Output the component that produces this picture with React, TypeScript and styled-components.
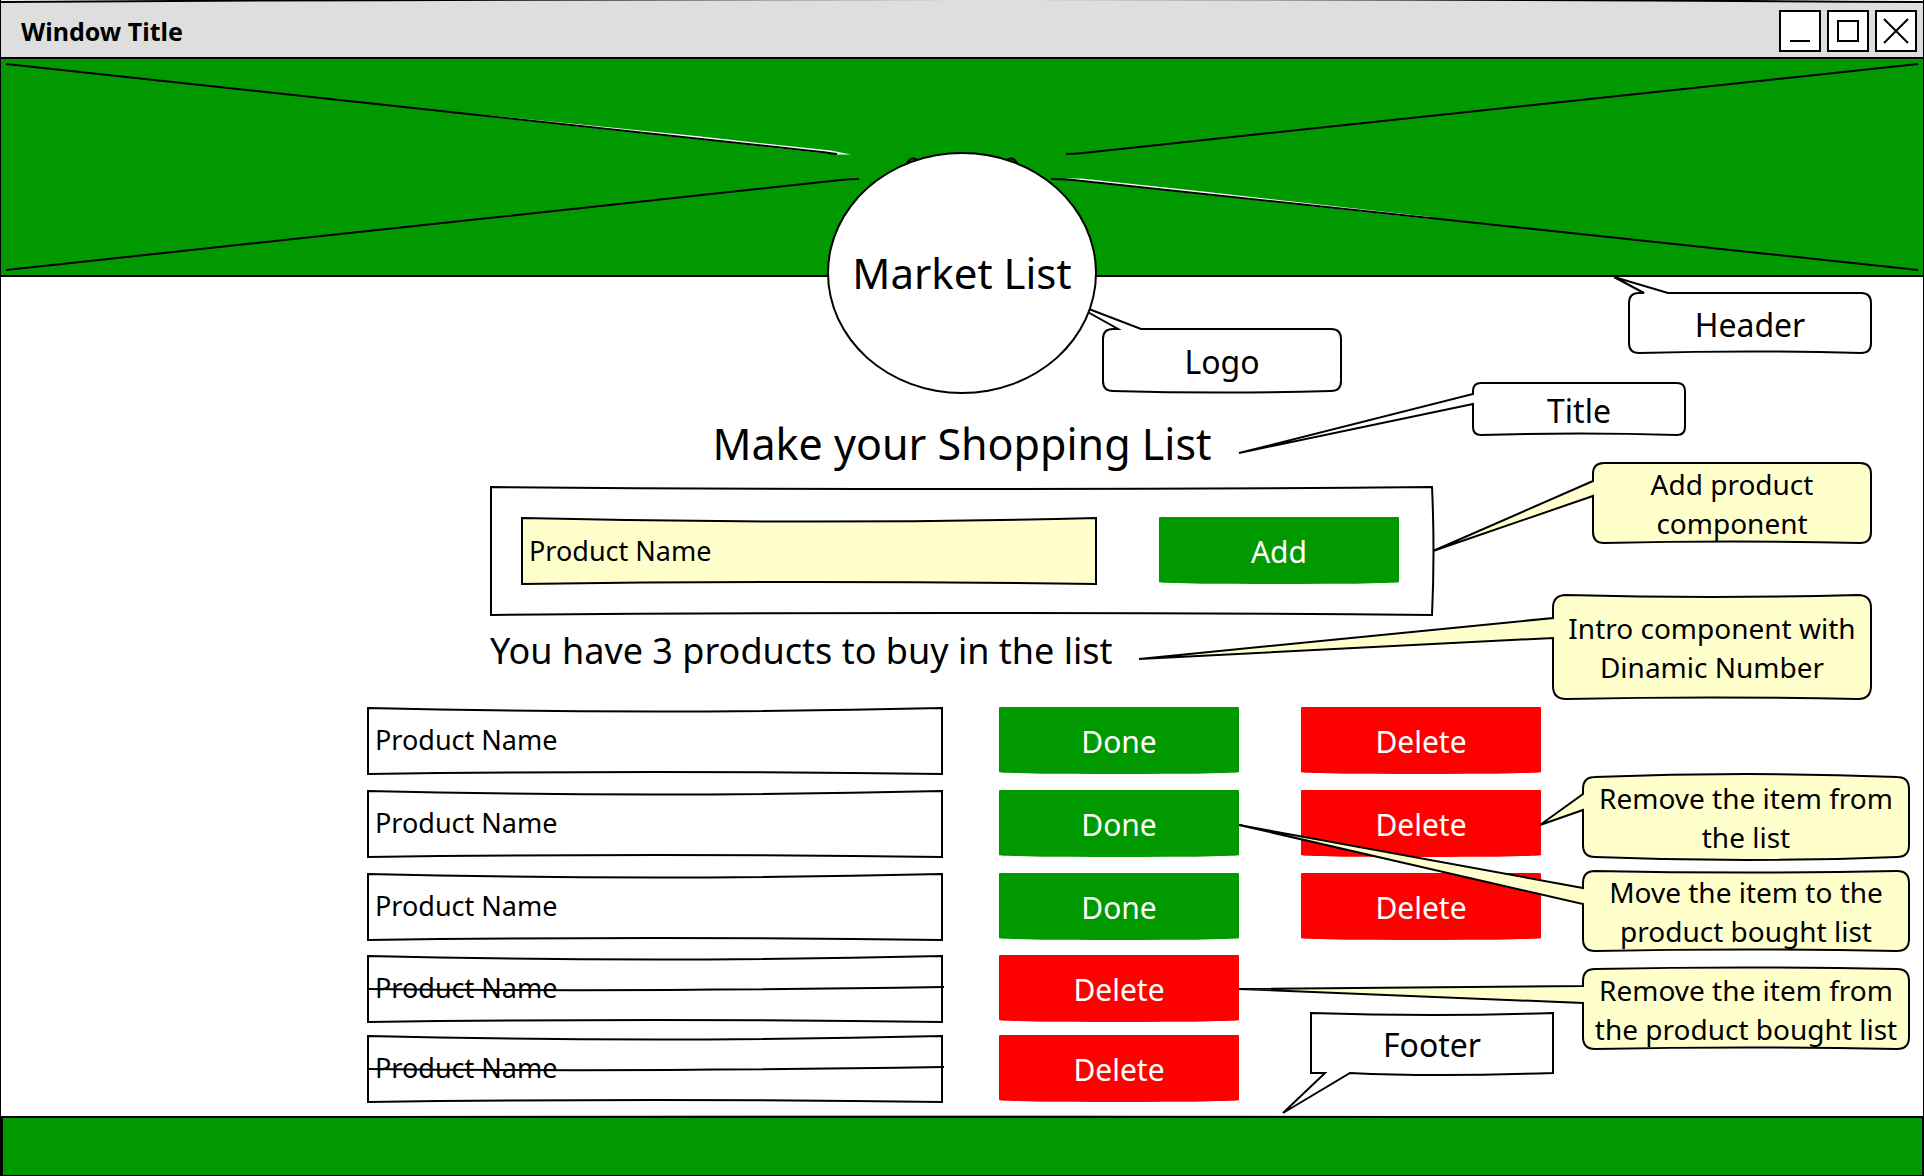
import React from "react";
import styled, { createGlobalStyle } from "styled-components";

const ink = "#000000";
const green = "#009900";
const red = "#ff0000";
const note = "#ffffcc";
const paper = "#ffffff";

const GlobalStyle = createGlobalStyle`
  *, *::before, *::after { box-sizing: border-box; }
  body {
    margin: 0;
    background: ${paper};
    color: ${ink};
    font-family: "Comic Sans MS", "Noto Sans", "Open Sans", sans-serif;
  }
  button, input { font-family: inherit; }
`;

const Page = styled.div`
  position: relative;
  display: flex;
  flex-direction: column;
  min-height: 100vh;
  overflow: hidden;
  border: solid ${ink};
  border-width: 0 1px;
`;

const Backdrop = styled.svg`
  position: absolute;
  inset: 0;
  width: 100%;
  height: 100%;
  overflow: visible;
  pointer-events: none;
`;

type SketchProps = { w: number; h: number; d: string; fill?: string; children?: React.ReactNode };

/* A hand-drawn outline stretched over its parent box. */
function Sketch({ w, h, d, fill = "none", children }: SketchProps) {
  return (
    <Backdrop viewBox={`0 0 ${w} ${h}`} preserveAspectRatio="none" aria-hidden="true">
      <path d={d} fill={fill} stroke={ink} strokeWidth={2} vectorEffect="non-scaling-stroke" />
      {children}
    </Backdrop>
  );
}

/* Title bar */

const TitleBar = styled.div`
  position: relative;
  display: flex;
  align-items: center;
  justify-content: space-between;
  height: 59px;
  padding: 2px 6px 0 20px;
`;

const WindowTitle = styled.div`
  position: relative;
  font-size: 25px;
  font-weight: 700;
  line-height: 36px;
`;

const WindowControls = styled.div`
  position: relative;
  display: flex;
  gap: 6px;
`;

const WindowButton = styled.button`
  width: 42px;
  height: 42px;
  padding: 0;
  border: 2px solid ${ink};
  background: ${paper};
  svg { display: block; }
`;

/* Header */

const Header = styled.header`
  position: relative;
  display: flex;
  justify-content: center;
  align-items: flex-start;
  height: 218px;
  padding-top: 93px;
  background: ${green};
  border-bottom: 2px solid ${ink};
`;

const Logo = styled.div`
  position: relative;
  z-index: 3;
  display: flex;
  flex: none;
  align-items: center;
  justify-content: center;
  width: 270px;
  height: 242px;
  border: 2px solid ${ink};
  border-radius: 50%;
  background: ${paper};
  font-size: 42px;
  line-height: 56px;
  white-space: nowrap;
`;

/* Main column */

const Main = styled.main`
  display: flex;
  flex-direction: column;
  width: 100%;
  max-width: 1190px;
  margin: 0 auto;
  padding: 137px 0 12px;
`;

const Heading = styled.h1`
  margin: 0;
  text-align: center;
  font-size: 43px;
  font-weight: 400;
  line-height: 60px;
`;

const AddPanel = styled.form`
  position: relative;
  display: flex;
  align-items: flex-start;
  gap: 62px;
  width: 944px;
  height: 130px;
  margin: 12px auto 0;
  padding: 31px 35px 0 31px;
`;

const Field = styled.div`
  position: relative;
  flex: none;
  width: 576px;
  height: 68px;
`;

const FieldInput = styled.input`
  position: relative;
  display: block;
  width: 100%;
  height: 66px;
  padding: 0 8px;
  border: 0;
  outline: 0;
  background: transparent;
  color: ${ink};
  font-size: 27px;
`;

const FieldText = styled.span`
  position: relative;
  display: block;
  padding: 0 8px;
  font-size: 27px;
  line-height: 66px;
`;

const ActionButton = styled.button<{ $tone: string }>`
  position: relative;
  width: 240px;
  height: 67px;
  padding: 2px 0 0;
  border: 0;
  border-radius: 1px 1px 50% 50% / 1px 1px 2px 2px;
  background: ${(p) => p.$tone};
  color: ${paper};
  font-size: 30px;
  line-height: 40px;
`;

const Summary = styled.p`
  margin: 11px 123px 0;
  font-size: 36px;
  line-height: 48px;
  white-space: nowrap;
`;

const ProductList = styled.ul<{ $gap: number; $top: number }>`
  display: flex;
  flex-direction: column;
  gap: ${(p) => p.$gap}px;
  margin: ${(p) => p.$top}px 0 0;
  padding: 0;
  list-style: none;
`;

const ProductRow = styled.li`
  display: grid;
  grid-template-columns: 576px 240px 240px;
  column-gap: 56px;
  & > :nth-child(3) { margin-left: 6px; }
`;

const Footer = styled.footer`
  position: relative;
  flex: 1;
  min-height: 61px;
`;

/* Annotations */

const Annotations = styled.aside`
  position: absolute;
  top: 0;
  left: 50%;
  z-index: 2;
  pointer-events: none;
`;

const Balloon = styled.div<{ $x: number; $y: number; $w: number; $h: number }>`
  position: absolute;
  left: ${(p) => p.$x}px;
  top: ${(p) => p.$y}px;
  display: flex;
  align-items: center;
  justify-content: center;
  width: ${(p) => p.$w}px;
  height: ${(p) => p.$h}px;
`;

const BalloonText = styled.div<{ $large: boolean }>`
  position: relative;
  padding-top: 2px;
  text-align: center;
  white-space: pre;
  font-size: ${(p) => (p.$large ? 32 : 28)}px;
  line-height: 39px;
`;

type Tail = { side: "left" | "top" | "bottom"; from: number; to: number; x: number; y: number };
type CalloutProps = {
  x: number; y: number; w: number; h: number;
  text: string; tail: Tail;
  radius?: number; fill?: string; large?: boolean;
  top?: number; bottom?: number;
};

/* x is measured from the centre of the window; tail coordinates from the balloon's corner. */
function Callout({ x, y, w, h, text, tail, radius: r = 10, fill = note, large = false, top = 0, bottom = -3 }: CalloutProps) {
  const R = w - 1;
  const B = h - 1;
  const parts = [`M${1 + r} 1`];
  if (tail.side === "top") parts.push(`L${tail.from} 1 L${tail.x} ${tail.y} L${tail.to} 1`);
  parts.push(`Q${w / 2} ${1 + top} ${R - r} 1 Q${R} 1 ${R} ${1 + r} V${B - r} Q${R} ${B} ${R - r} ${B}`);
  if (tail.side === "bottom") {
    parts.push(`Q${w / 2} ${B + bottom} ${tail.to} ${B} L${tail.x} ${tail.y} L${tail.from} ${B} H${1 + r}`);
  } else {
    parts.push(`Q${w / 2} ${B + bottom} ${1 + r} ${B}`);
  }
  parts.push(`Q1 ${B} 1 ${B - r}`);
  if (tail.side === "left") parts.push(`V${tail.to} L${tail.x} ${tail.y} L1 ${tail.from}`);
  parts.push(`V${1 + r} Q1 1 ${1 + r} 1 Z`);
  return (
    <Balloon $x={x} $y={y} $w={w} $h={h}>
      <Sketch w={w} h={h} fill={fill} d={parts.join(" ")} />
      <BalloonText $large={large}>{text}</BalloonText>
    </Balloon>
  );
}

const callouts: CalloutProps[] = [
  { x: 140, y: 328, w: 240, h: 64, text: "Logo", fill: paper, large: true, bottom: 3, tail: { side: "top", from: 16, to: 39, x: -34, y: -27 } },
  { x: 666, y: 292, w: 244, h: 62, text: "Header", fill: paper, large: true, tail: { side: "top", from: 16, to: 40, x: -14, y: -15 } },
  { x: 510, y: 382, w: 214, h: 54, text: "Title", fill: paper, large: true, radius: 8, tail: { side: "left", from: 12, to: 22, x: -233, y: 71 } },
  { x: 630, y: 462, w: 280, h: 82, text: "Add product\ncomponent", radius: 11, tail: { side: "left", from: 19, to: 34, x: -159, y: 89 } },
  { x: 590, y: 594, w: 320, h: 106, text: "Intro component with\nDinamic Number", radius: 13, top: 4, tail: { side: "left", from: 24, to: 44, x: -413, y: 65 } },
  { x: 620, y: 776, w: 328, h: 82, text: "Remove the item from\nthe list", radius: 12, top: -6, bottom: 6, tail: { side: "left", from: 18, to: 34, x: -42, y: 49 } },
  { x: 620, y: 870, w: 328, h: 82, text: "Move the item to the\nproduct bought list", radius: 12, top: 3, tail: { side: "left", from: 18, to: 34, x: -343, y: -45 } },
  { x: 620, y: 968, w: 328, h: 82, text: "Remove the item from\nthe product bought list", radius: 12, top: -3, tail: { side: "left", from: 18, to: 35, x: -343, y: 21 } },
  { x: 348, y: 1012, w: 244, h: 62, text: "Footer", fill: paper, large: true, radius: 0, top: 4, bottom: 4, tail: { side: "bottom", from: 15, to: 40, x: -27, y: 101 } },
];

function FieldFrame({ fill = paper, struck = false }: { fill?: string; struck?: boolean }) {
  return (
    <Sketch w={576} h={68} fill={fill} d="M1 1 Q288 8 575 1 V67 Q288 63 1 67 Z">
      {struck && (
        <path d="M1 34 Q270 37 577 32" fill="none" stroke={ink} strokeWidth={2} />
      )}
    </Sketch>
  );
}

function Product({ bought = false }: { bought?: boolean }) {
  return (
    <ProductRow>
      <Field>
        <FieldFrame struck={bought} />
        <FieldText>Product Name</FieldText>
      </Field>
      {!bought && <ActionButton type="button" $tone={green}>Done</ActionButton>}
      <ActionButton type="button" $tone={red}>Delete</ActionButton>
    </ProductRow>
  );
}

export default function App() {
  return (
    <>
      <GlobalStyle />
      <Page>
        <TitleBar>
          <Sketch w={1922} h={59} fill="#dedede" d="M-1 2 Q961 -4 1923 2 V58 H-1 Z" />
          <WindowTitle>Window Title</WindowTitle>
          <WindowControls>
            <WindowButton type="button" aria-label="Minimize">
              <svg width="38" height="38" viewBox="0 0 38 38" stroke={ink} strokeWidth="2">
                <path d="M9 29H29" />
              </svg>
            </WindowButton>
            <WindowButton type="button" aria-label="Maximize">
              <svg width="38" height="38" viewBox="0 0 38 38" stroke={ink} strokeWidth="2" fill="none">
                <path d="M9 9H29V29H9Z" />
              </svg>
            </WindowButton>
            <WindowButton type="button" aria-label="Close">
              <svg width="38" height="38" viewBox="0 0 38 38" stroke={ink} strokeWidth="2">
                <path d="M7 7L31 31M31 7L7 31" />
              </svg>
            </WindowButton>
          </WindowControls>
        </TitleBar>

        <Header>
          <Backdrop viewBox="0 0 1922 216" preserveAspectRatio="none" aria-hidden="true">
            <path d="M480 55.5L700 77.6L830 91.6L850 95.5H836L480 57Z" fill={paper} />
            <path d="M1430 158L1200 132.2L1080 119.4H1064L1076 122L1430 160Z" fill={paper} />
            <g fill="none" stroke={ink} strokeWidth="2">
              <path d="M5 5L825 93.5Q829 94.5 836 95" />
              <path d="M1917 5L1082 94Q1074 95 1065 95" />
              <path d="M5 211L840 121Q848 120 858 120" />
              <path d="M1917 211L1072 121Q1060 120 1050 120" />
              <path d="M906 104Q911 96 918 102" />
              <path d="M1004 102Q1011 96 1016 104" />
            </g>
          </Backdrop>
          <Logo>Market List</Logo>
        </Header>

        <Main>
          <Heading>Make your Shopping List</Heading>
          <AddPanel onSubmit={(e) => e.preventDefault()}>
            <Sketch w={944} h={130} fill={paper} d="M1 1 Q472 5 942 1 Q945 65 942 129 Q472 125 1 129 Z" />
            <Field>
              <FieldFrame fill={note} />
              <FieldInput type="text" aria-label="Product name" defaultValue="Product Name" />
            </Field>
            <ActionButton type="submit" $tone={green}>Add</ActionButton>
          </AddPanel>
          <Summary>You have 3 products to buy in the list</Summary>
          <ProductList $gap={15} $top={32}>
            <Product />
            <Product />
            <Product />
          </ProductList>
          <ProductList $gap={12} $top={14}>
            <Product bought />
            <Product bought />
          </ProductList>
        </Main>

        <Footer>
          <Sketch w={1922} h={61} fill={green} d="M1 2 Q961 -1 1922 2 V61 Q961 59 1 61 Z" />
        </Footer>

        <Annotations>
          {callouts.map((c) => (
            <Callout key={c.y} {...c} />
          ))}
        </Annotations>
      </Page>
    </>
  );
}
